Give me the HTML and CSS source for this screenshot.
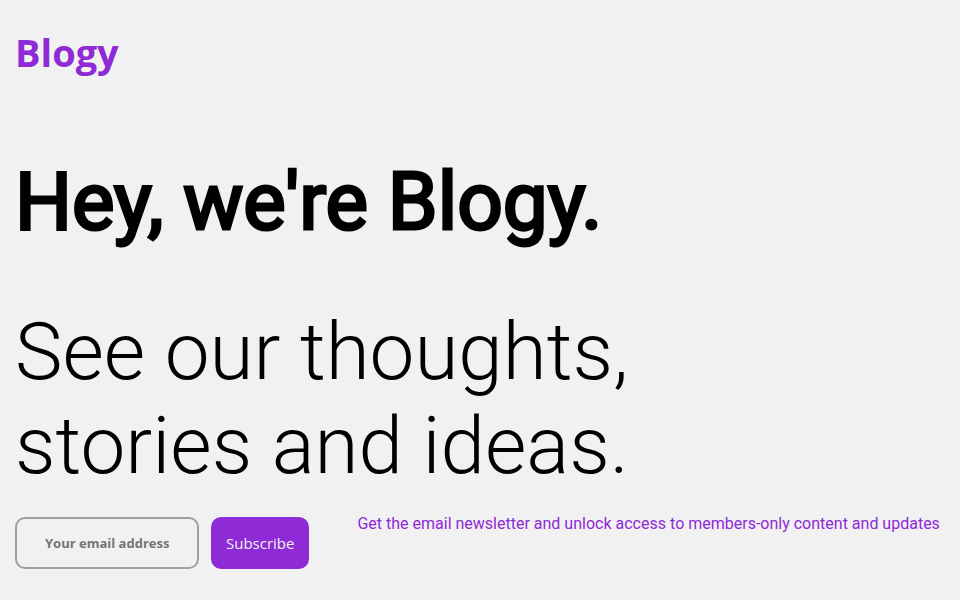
FILE: index.html
```html
<!DOCTYPE html>
<html lang="en">
<head>
<meta charset="utf-8">
<title>Blogy</title>
<link rel="stylesheet" href="styles.css">
</head>
<body>
<header class="header"><a class="logo" href="#">Blogy</a></header>
<main class="hero">
<h1 class="title">Hey, we're Blogy.</h1>
<p class="tagline">See our thoughts, stories and ideas.</p>
<div class="signup">
<form class="form">
<input class="email" type="email" placeholder="Your email address" aria-label="Your email address">
<button class="subscribe" type="button">Subscribe</button>
</form>
<p class="note">Get the email newsletter and unlock access to members-only content and updates</p>
</div>
</main>
</body>
</html>
```
FILE: styles.css
```css
* { box-sizing: border-box; }
body {
  margin: 0;
  padding: 0 15px;
  background: #f1f1f1;
  color: #000;
  font-family: Roboto, sans-serif;
}
.header { padding-top: 25px; }
.logo {
  display: block;
  color: #8e2ad6;
  font: bold 38px/54px "Open Sans", sans-serif;
  text-decoration: none;
}
.title {
  margin: 76px 0 0;
  font-size: 80px;
  font-weight: 400;
  line-height: 94px;
  -webkit-text-stroke: 3px #000;
}
.tagline {
  max-width: 700px;
  margin: 56px 0 0;
  font-size: 80px;
  font-weight: 300;
  line-height: 94px;
}
.signup {
  display: flex;
  gap: 48px;
  margin-top: 24px;
}
.form { display: flex; gap: 12px; }
.email {
  width: 184px;
  height: 52px;
  padding: 0 28px;
  border: 2px solid #a0a0a0;
  border-radius: 10px;
  background: transparent;
  font: bold 13px "Open Sans", sans-serif;
}
.email::placeholder { color: #757575; }
.subscribe {
  height: 52px;
  padding: 0 15px;
  border: 0;
  border-radius: 10px;
  background: #8e2ad6;
  color: #f1f1f1;
  font: 15px "Open Sans", sans-serif;
}
.note {
  margin: 0;
  color: #8e2ad6;
  font-size: 16px;
  font-kerning: none;
  line-height: 14px;
}
```
